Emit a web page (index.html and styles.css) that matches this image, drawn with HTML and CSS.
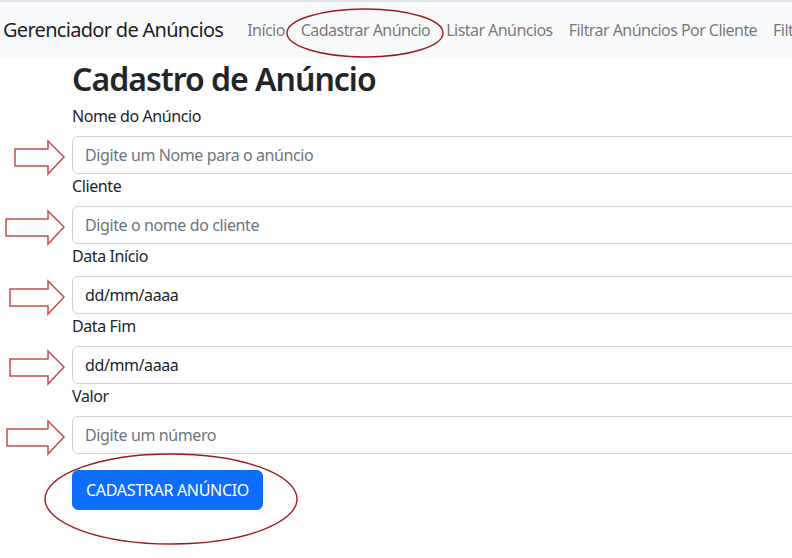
FILE: index.html
```html
<!DOCTYPE html>
<html lang="pt-BR">
<head>
<meta charset="utf-8">
<title>Gerenciador de Anúncios</title>
<link rel="stylesheet" href="styles.css">
</head>
<body>
<div class="page">
  <nav class="navbar">
    <span class="brand">Gerenciador de Anúncios</span>
    <ul class="nav">
      <li class="nav-link">Início</li>
      <li class="nav-link">Cadastrar Anúncio</li>
      <li class="nav-link">Listar Anúncios</li>
      <li class="nav-link">Filtrar Anúncios Por Cliente</li>
      <li class="nav-link">Filtrar Anúncios Por Data</li>
    </ul>
  </nav>
  <main class="content">
    <h1 class="title">Cadastro de Anúncio</h1>
    <form class="form">
      <label class="form-label">Nome do Anúncio</label>
      <input class="form-control" type="text" placeholder="Digite um Nome para o anúncio">
      <label class="form-label">Cliente</label>
      <input class="form-control" type="text" placeholder="Digite o nome do cliente">
      <label class="form-label">Data Início</label>
      <div class="form-control value">dd/mm/aaaa</div>
      <label class="form-label">Data Fim</label>
      <div class="form-control value">dd/mm/aaaa</div>
      <label class="form-label">Valor</label>
      <input class="form-control" type="text" placeholder="Digite um número">
      <div class="actions">
        <button type="button" class="btn">CADASTRAR ANÚNCIO</button>
      </div>
    </form>
  </main>
  <svg class="annotations" width="792" height="558" viewBox="0 0 792 558">
    <g fill="#fff" stroke="#c0504d" stroke-width="1.5" stroke-linejoin="miter">
      <path d="M15 147 H48 V139 L64 155 L48 172 V164 H15 Z"/>
      <path d="M6 217 H48 V209 L64 225 L48 242 V234 H6 Z"/>
      <path d="M10 287 H48 V279 L64 295 L48 312 V304 H10 Z"/>
      <path d="M10 357 H48 V349 L64 365 L48 382 V374 H10 Z"/>
      <path d="M7 427 H48 V419 L64 435 L48 452 V444 H7 Z"/>
    </g>
    <g fill="none" stroke="#9e1b1b" stroke-width="1.4">
      <ellipse cx="365" cy="31" rx="78" ry="24"/>
      <ellipse cx="171" cy="497" rx="126" ry="45"/>
    </g>
  </svg>
</div>
</body>
</html>
```
FILE: styles.css
```css
* { box-sizing: border-box; }
html, body {
  margin: 0;
  padding: 0;
  background: #fff;
  overflow: hidden;
}
body {
  font-family: "Noto Sans", "Open Sans", sans-serif;
  font-size: 16px;
  line-height: 1.5;
  letter-spacing: -0.4px;
  color: #212529;
  width: 792px;
  height: 558px;
}
.page {
  position: relative;
  width: 792px;
  height: 558px;
  border-top: 2px solid #dee2e6;
  overflow: hidden;
}
.navbar {
  display: flex;
  align-items: center;
  height: 56px;
  background: #f8f9fa;
  padding: 0 0 0 3px;
  white-space: nowrap;
  overflow: hidden;
}
.brand {
  font-size: 20px;
  letter-spacing: -0.7px;
  color: rgba(0,0,0,.9);
  margin-right: 16px;
  line-height: 30px;
}
.nav {
  display: flex;
  list-style: none;
  margin: 0;
  padding: 0;
}
.nav-link {
  padding: 0 8px;
  color: rgba(0,0,0,.55);
  font-size: 16px;
  letter-spacing: -0.55px;
}
.content {
  padding-left: 72px;
  width: 940px;
}
.title {
  font-size: 32px;
  font-weight: 600;
  letter-spacing: -1px;
  line-height: 40px;
  margin: 1px 0 5px;
}
.form {
  display: flex;
  flex-direction: column;
}
.form-label {
  display: block;
  line-height: 24px;
  margin-bottom: 8px;
}
.form-control {
  display: block;
  width: 100%;
  height: 38px;
  padding: 6px 12px;
  font-family: inherit;
  font-size: 16px;
  letter-spacing: -0.4px;
  line-height: 24px;
  color: #212529;
  background: #fff;
  border: 1px solid #ced4da;
  border-radius: 6px;
}
.form-control::placeholder { color: #6c757d; }
.actions {
  margin-top: 16px;
}
.btn {
  font-family: inherit;
  font-size: 16px;
  letter-spacing: -0.3px;
  line-height: 24px;
  padding: 7px 13px;
  color: #fff;
  background: #0d6efd;
  border: 1px solid #0d6efd;
  border-radius: 6px;
}
.annotations {
  position: absolute;
  left: 0;
  top: 0;
  pointer-events: none;
}
```
